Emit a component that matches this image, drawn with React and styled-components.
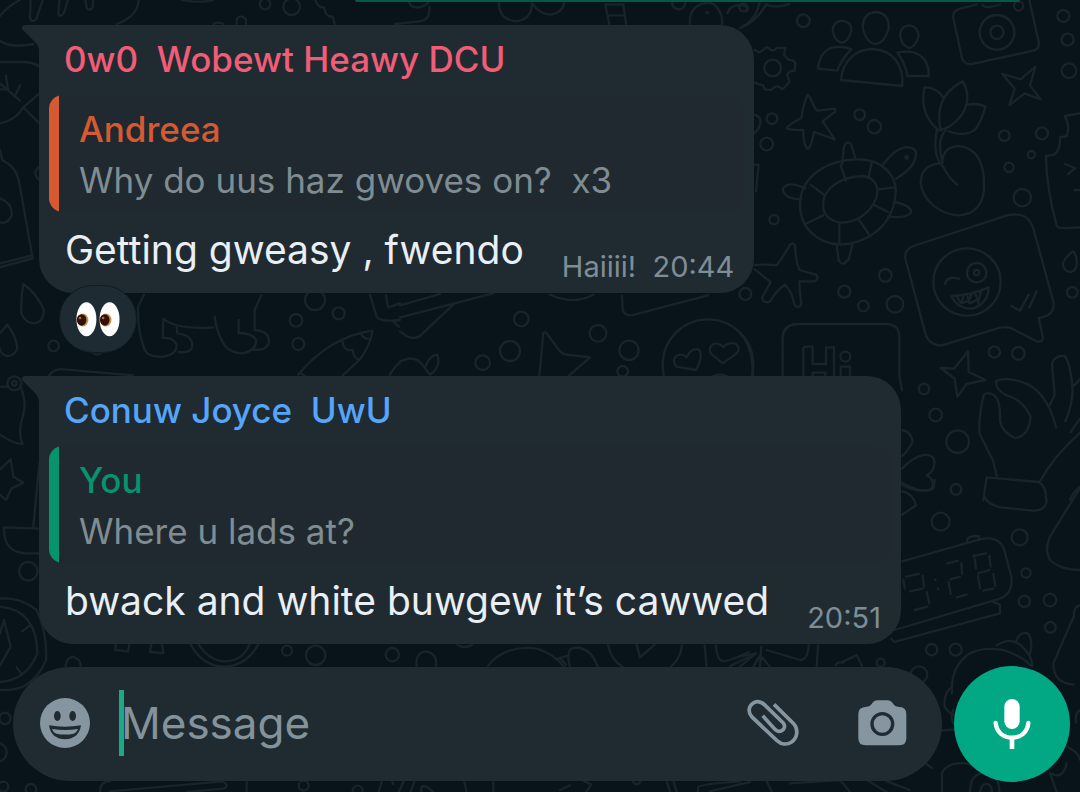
import React from "react";
import styled, { createGlobalStyle } from "styled-components";

const GlobalStyle = createGlobalStyle`
  * { box-sizing: border-box; }
  body {
    margin: 0;
    background: #09131a;
    font-family: Inter, "Liberation Sans", sans-serif;
  }
`;

const Screen = styled.div`
  position: relative;
  isolation: isolate;
  display: flex;
  flex-direction: column;
  min-height: 100vh;
  overflow: hidden;
  background: #09131a;
`;

const WallpaperLayer = styled.svg`
  position: absolute;
  inset: 0;
  z-index: -1;
  width: 100%;
  height: 100%;
  fill: none;
  stroke: #18232a;
  stroke-width: 7;
  stroke-linecap: round;
  stroke-linejoin: round;
`;

const SentEdge = styled.div`
  height: 2px;
  margin: 0 60px 0 355px;
  border-radius: 0 0 40px 40px;
  background: #06584a;
`;

const Thread = styled.main`
  display: flex;
  flex-direction: column;
  align-items: flex-start;
  gap: 83px;
  padding: 23px 40px 22px 39px;
`;

const Bubble = styled.article`
  position: relative;
  max-width: 100%;
  padding: 10px 10px 8px;
  border-radius: 0 34px 34px 34px;
  background: #1f2b31;
`;

const Tail = styled.svg`
  position: absolute;
  top: 0;
  left: -17px;
  width: 18px;
  height: 26px;
  fill: #1f2b31;
`;

const Sender = styled.h2`
  margin: 0 0 12px;
  padding: 0 15px;
  font-size: 35px;
  font-weight: 500;
  line-height: 48px;
  white-space: pre-wrap;
  color: ${(p) => p.$color};
`;

const Quote = styled.blockquote`
  margin: 0;
  padding: 9px 20px 6px 30px;
  border-radius: 14px;
  background: linear-gradient(to right, ${(p) => p.$color} 10px, #20292f 10px);
  font-size: 35px;
  line-height: 51px;
`;

const QuoteName = styled.cite`
  display: block;
  font-style: normal;
  font-weight: 500;
  color: ${(p) => p.$color};
`;

const QuoteText = styled.p`
  margin: 0;
  white-space: pre-wrap;
  color: #7f8d93;
`;

const BodyRow = styled.div`
  display: flex;
  align-items: flex-end;
  justify-content: space-between;
  gap: 38px;
  padding: 8px 10px 0 16px;
`;

const Body = styled.p`
  margin: 0;
  padding-bottom: 5px;
  font-size: 39px;
  line-height: 60px;
  color: #e9eff5;
`;

const Meta = styled.span`
  flex: none;
  font-size: 29px;
  line-height: 36px;
  white-space: pre;
  color: #7f8d96;
`;

const Reaction = styled.button`
  position: absolute;
  left: 20px;
  bottom: -60px;
  display: flex;
  align-items: center;
  justify-content: center;
  width: 78px;
  height: 68px;
  padding: 0;
  border: 1px solid #111c22;
  border-radius: 34px;
  background: #1f2b32;
`;

const Composer = styled.form`
  display: flex;
  align-items: center;
  gap: 12px;
  margin-top: auto;
  padding: 0 10px 10px 13px;
`;

const Field = styled.div`
  flex: 1;
  display: flex;
  align-items: center;
  min-width: 0;
  height: 114px;
  padding: 0 32px 3px 24px;
  border-radius: 57px;
  background: #1f2b31;
`;

const IconButton = styled.button`
  flex: none;
  display: flex;
  align-items: center;
  justify-content: center;
  width: 56px;
  height: 60px;
  padding: 0;
  border: 0;
  background: none;
  color: #8696a0;
`;

const Attachments = styled.div`
  flex: none;
  display: flex;
  gap: 53px;
`;

const InputWrap = styled.div`
  position: relative;
  flex: 1;
  min-width: 0;
  margin-left: 28px;
`;

const MessageInput = styled.input`
  display: block;
  width: 100%;
  height: 66px;
  padding: 0;
  border: 0;
  outline: 0;
  background: none;
  color: #e9eff5;
  font-family: inherit;
  font-size: 44px;
  caret-color: #1da886;
  &::placeholder {
    color: #84929b;
    opacity: 1;
  }
`;

const Caret = styled.span`
  position: absolute;
  top: 0;
  left: -2px;
  width: 5px;
  height: 66px;
  background: #1aaa88;
`;

const MicButton = styled.button`
  flex: none;
  display: flex;
  align-items: center;
  justify-content: center;
  width: 116px;
  height: 116px;
  padding: 0;
  border: 0;
  border-radius: 50%;
  background: #02a884;
`;

const Dots = ({ list }) =>
  list.map(([x, y, r]) => <circle key={`${x}-${y}`} cx={x} cy={y} r={r} />);

const Patch = ({ x, y, children }) => (
  <g transform={`translate(${x} ${y}) scale(0.33333)`}>{children}</g>
);

function Wallpaper() {
  return (
    <WallpaperLayer viewBox="0 0 1080 792" preserveAspectRatio="xMidYMid slice" aria-hidden="true">
      {/* top edge, left */}
      <Patch x={0} y={0}>
        <path d="M0 48C18 26 40 10 60 0M0 122C20 138 60 140 100 132M350 72C390 58 414 34 416 0M92 0L90 55Q98 72 110 55L128 0M178 0L175 42Q182 54 192 38L204 0M256 0L260 24Q270 36 279 20V0M545 0Q600 10 640 0" />
        <path d="M0 186H70Q105 188 118 200M0 370Q45 362 70 322L118 370M70 322L118 280M0 250L60 302M18 228L24 268M60 256L44 290M0 268L24 268" />
        <path d="M0 450Q5 475 8 482Q50 500 58 550L98 775L0 802M0 790L90 768M0 595Q38 610 35 645Q25 672 0 668M118 500Q94 518 118 540" />
        <path d="M946 0Q955 25 972 22Q976 52 998 50L1004 72M640 72Q655 64 670 72M710 72V58Q722 40 738 58V72" />
        <Dots list={[[795, 12, 16], [875, 20, 25]]} />
      </Patch>
      {/* top edge, middle */}
      <Patch x={360} y={0}>
        <path d="M148 8Q154 25 178 22Q206 14 208 0M208 20Q212 60 180 64L105 72M416 5Q416 60 470 64Q515 58 516 10Q540 44 575 44Q612 34 612 5M736 14L748 72M790 14L798 72M736 14H790M744 46H790M990 72C985 20 1030 0 1060 12Q1090 35 1086 72M1102 40Q1110 12 1150 16Q1170 24 1160 34M1146 80Q1190 60 1200 0" />
        <Dots list={[[956, 8, 20], [1042, 38, 2]]} />
      </Patch>
      {/* people, camera, star, tulip and turtle */}
      <Patch x={740} y={0}>
        <path d="M0 84Q50 65 78 14Q110 26 148 12M728 14Q730 28 780 14" />
        <path d="M278 90Q280 64 307 62Q336 66 334 92Q326 126 304 128Q282 122 278 90M368 80Q370 38 408 36Q448 40 446 84Q434 130 405 132Q376 126 368 80M480 104Q482 78 508 76Q536 80 536 108Q526 142 506 144Q484 136 480 104" />
        <path d="M303 240C308 180 350 147 398 147C454 150 492 190 487 258ZM334 148Q312 138 280 142Q240 152 234 206L292 212Q304 178 334 148M472 158Q500 152 524 158Q568 176 566 228L502 228Q496 190 472 158" />
        <path d="M710 14L660 26Q636 34 640 54L666 174Q672 194 696 192L880 152Q900 146 896 126L868 0" />
        <circle cx="771" cy="97" r="52" /><circle cx="771" cy="97" r="20" />
        <path d="M44 150L58 158L72 148Q78 138 88 146Q98 158 110 144L136 144L132 164L146 180Q162 178 166 190L164 212Q146 212 142 224L148 246L128 268Q114 254 102 262L94 270L74 268Q70 252 60 254L44 248" />
        <circle cx="98" cy="204" r="25" />
        <path d="M787 222L842 238L886 200Q876 236 870 256L902 298L854 280L808 316L824 266Z" />
        <path d="M203 284C214 290 218 322 232 332L284 326Q292 334 276 342L248 364Q268 392 284 418L222 396Q214 440 204 446Q190 440 190 390Q164 392 140 386Q144 374 184 354Q190 310 203 284Z" />
        <path d="M608 290Q590 262 554 262Q536 340 594 390Q634 388 668 340Q696 290 668 244Q604 276 598 340Q596 370 604 392M682 314Q716 308 736 320Q726 360 706 388Q676 412 626 394M590 392Q576 470 612 504Q628 536 652 554M618 390Q588 420 608 488M608 480Q612 440 656 438C710 442 732 490 732 550C736 612 700 646 658 646C594 644 546 596 542 548Q544 490 608 490" />
        <path d="M180 608C184 530 260 478 356 478C434 478 476 536 466 590C454 680 384 730 300 734C230 730 176 680 180 608ZM250 606C254 566 300 530 368 528C410 534 418 566 408 596C390 640 350 668 300 668C262 660 246 640 250 606Z" />
        <path d="M302 496L318 542M396 484L386 530M466 562L414 568M444 636L400 614M386 702L356 658M298 730V670M196 672L250 646M212 554L254 586M306 494L312 440Q322 418 334 434L346 476M430 492Q464 448 494 442Q530 440 528 464Q524 504 468 536M196 564Q140 540 128 568Q134 598 184 598M462 606Q510 614 514 636Q502 656 444 650M290 736L296 780M338 730L326 780" />
        <path d="M44 494H56L48 574M1020 340L974 348Q992 380 980 408L960 412Q962 450 942 464L918 468Q920 570 950 676Q954 686 980 684L1020 682M974 492L1006 504L984 522M1004 570H1020" />
        <Dots list={[[10, 22, 12], [190, 62, 19], [836, 18, 14], [970, 48, 18], [983, 119, 18], [987, 212, 22], [96, 356, 16], [80, 432, 19], [359, 344, 16], [403, 380, 20], [793, 407, 16], [906, 400, 18], [874, 464, 11], [807, 502, 14], [847, 593, 26], [102, 659, 14], [500, 472, 4]]} />
        <path d="M44 344Q66 350 60 374Q56 390 44 398" />
      </Patch>
      {/* message card, greeting sign and hand */}
      <Patch x={740} y={240}>
        <path d="M44 75Q84 72 110 76Q130 50 150 14Q164 4 166 22Q166 60 178 90L228 104Q240 116 222 124H178Q178 150 184 192Q178 208 164 196Q154 150 134 134Q110 150 90 184Q72 192 66 174Q78 150 92 126L44 88M296 60Q308 82 322 60" />
        <path d="M790 -70L520 18Q492 30 496 56L556 280Q566 316 606 316L770 266Q800 256 820 268L890 304Q912 308 908 288L896 234Q948 226 940 184L880 -34Q866 -76 830 -76Q810 -78 790 -70" />
        <circle cx="681" cy="126" r="101" /><circle cx="710" cy="98" r="29" /><circle cx="710" cy="98" r="8" />
        <path d="M614 132Q622 106 658 116M634 168Q700 164 746 142Q744 190 698 206Q654 208 634 168M648 166L664 190L672 164M680 162L686 182L696 160M704 158L716 182L724 150M670 188Q682 180 690 190L714 178L716 198M814 198L840 212L866 164M868 202L890 154" />
        <path d="M968 70Q976 50 1000 34Q1012 48 1010 74Q1006 96 988 96Q970 90 968 70M128 408V290Q132 254 170 252H440Q478 254 478 290V408L486 450M190 408V326Q190 320 200 320H218V372H258V322H282V408M218 408V398H256V408M302 408V380H330V408" />
        <circle cx="316" cy="350" r="15" />
        <path d="M602 384L642 386L684 334L686 396L736 420L680 432L652 470L644 416Z" />
        <path d="M0 280Q40 320 38 408M486 570Q512 574 518 604Q506 632 486 648M486 686C530 640 580 630 584 668Q582 696 560 706Q586 720 576 746Q540 762 486 734" />
        <path d="M770 708L760 664L718 580Q716 520 732 464Q744 454 762 466Q782 480 780 540Q784 576 826 594Q866 590 872 530Q850 480 800 466Q766 450 768 424Q790 410 840 424Q920 446 948 562M930 494L944 464L936 370Q946 344 974 348Q992 370 998 450Q996 500 976 544M1020 418L998 440M1020 536L992 576M1020 578Q940 650 900 724M740 712L896 726Q920 740 918 780M740 712L730 780M1020 740Q1000 756 990 780" />
        <Dots list={[[16, 162, 18], [436, 106, 19], [313, 155, 18], [370, 198, 16], [465, 193, 25], [997, 157, 16], [763, 336, 17], [835, 340, 19], [552, 447, 16], [587, 525, 19], [653, 605, 34], [648, 748, 16]]} />
      </Patch>
      {/* clock radio, fruit and pear */}
      <Patch x={740} y={480}>
        <path d="M486 8Q550 44 580 26L584 0M486 34Q520 40 528 76L486 104M734 50Q740 72 780 82L880 92Q920 90 920 60L918 50M1020 24L930 170Q912 210 930 240Q960 270 1020 270" />
        <path d="M486 244L720 178Q780 164 794 214L814 290Q820 340 780 356L464 450M464 486L780 400V374L760 366M464 486L454 476M682 184Q676 168 716 168L718 180" />
        <path d="M498 290L536 282M548 288L552 320M510 334L548 326M490 300L494 326M560 336L568 370M524 390L562 380M622 250L654 242M664 250L666 282M632 298L660 290M626 306L632 342M650 352L680 344M700 228L738 220M748 228L752 260M704 236L708 266M714 280L748 270M760 282L766 318M714 288L720 324M730 332L760 326M586 298V300M594 326V328" />
        <path d="M1020 376Q1000 380 1002 408L940 550Q940 610 1000 614M636 640Q630 560 690 520Q730 500 790 510Q850 530 870 556M770 496Q810 470 840 494Q880 530 876 560M828 484Q842 450 866 462Q880 490 870 520M636 620Q610 640 614 680Q630 704 644 706M600 752L650 748M640 690Q626 720 650 740" />
        <path d="M0 560L48 520L0 530M60 560L64 500M60 526L40 560M60 526L90 560M80 510L180 540Q204 540 206 496M234 496L230 560M288 556Q290 544 310 548M310 544L350 526L366 558M1020 690Q1004 700 1008 728M606 936V880Q620 846 680 850L860 900M690 936Q690 880 736 878Q780 890 778 936M720 936Q724 908 744 912Q756 920 756 936M980 850Q970 900 930 880L950 936M980 800Q1020 820 1020 840M80 904L96 936M150 910L300 900L330 936M380 900L440 936M440 904L510 930M556 850L576 864" />
        <Dots list={[[602, 125, 27], [839, 172, 24], [858, 279, 14], [853, 364, 17], [930, 360, 19], [931, 442, 16], [575, 509, 17], [647, 509, 18], [537, 584, 25], [422, 548, 12]]} />
      </Patch>
      {/* strip between the bubbles */}
      <Patch x={0} y={270}>
        <path d="M70 42Q62 86 64 130Q76 160 104 160Q130 156 132 120Q110 70 70 42ZM22 164Q50 200 52 236Q42 260 20 258Q0 250 0 236M22 164L0 190M148 316Q160 296 190 298L400 316M0 350H22" />
        <path d="M432 74L414 110Q412 180 434 240Q444 262 490 260Q532 254 530 224Q520 200 488 204L490 146Q530 180 640 172M530 172L532 190Q582 196 576 232Q570 250 536 246M644 140Q650 190 674 226Q692 250 730 250Q770 240 768 210Q756 188 716 190L716 150M784 76L764 120V180Q812 184 806 220Q796 244 760 238" />
        <path d="M894 314Q990 200 1118 182Q1110 230 1078 270L1028 316M1028 216Q1030 244 1058 240Q1060 262 1074 268M1084 194Q1092 206 1104 206M900 308L914 318M1110 74L1130 140Q1140 156 1200 150M1158 76L1164 112L1200 100M1170 314Q1184 288 1200 278M1180 154L1196 170M276 246Q292 262 308 246" />
        <circle cx="43" cy="340" r="21" /><circle cx="43" cy="340" r="7" />
        <Dots list={[[161, 228, 16], [888, 151, 19], [1016, 130, 18], [895, 222, 18], [945, 90, 30]]} />
      </Patch>
      <Patch x={400} y={280}>
        <path d="M0 76L120 42M0 112L280 40M160 74Q100 130 60 168Q40 180 20 168L0 154M450 44Q520 76 580 44M666 48L668 90Q674 106 694 106L924 46M0 244Q50 220 74 264Q90 224 112 224Q124 262 90 284L74 264M418 288L430 158Q436 152 446 168L480 214Q490 226 520 226L570 232L506 288M888 270L830 260Q812 240 832 226Q848 220 860 232Q872 204 896 208Q912 226 888 270ZM968 250L932 220Q924 196 946 190Q964 192 970 202Q986 184 1008 192Q1024 206 1008 222ZM940 288Q960 280 980 288" />
        <Dots list={[[924, 254, 136], [364, 117, 22], [330, 213, 30], [248, 248, 22], [594, 160, 25], [687, 211, 29], [668, 274, 16]]} />
      </Patch>
      {/* left edge: bell, star, bowl and compass */}
      <Patch x={0} y={380}>
        <path d="M62 22Q82 70 68 110Q52 160 68 192Q40 192 0 164M0 268L32 238L40 290L70 308L34 326L18 360L0 344M118 250L100 440M118 446L12 442Q10 520 80 520H118M0 656Q60 650 110 690Q142 760 138 840Q120 890 70 920Q40 932 0 930M0 680Q110 690 112 820Q80 900 0 906M0 760L12 720L32 800L0 856M66 754L92 736M50 862L66 884" />
        <circle cx="85" cy="574" r="28" />
      </Patch>
      <Patch x={0} y={640}>
        <path d="M348 14L346 30L384 34L388 14M454 14L450 36L490 40L486 14M572 14Q610 80 672 80Q740 78 774 14M596 14Q630 66 680 64Q730 60 748 14M196 80Q200 52 220 50Q244 60 242 80M0 310Q22 320 20 340Q16 360 0 364M300 456Q300 424 330 424M330 454L670 424Q690 440 670 446L560 456M740 424V456" />
        <Dots list={[[861, 32, 15], [947, 46, 29], [15, 235, 17], [10, 440, 15], [93, 448, 16], [911, 437, 15]]} />
      </Patch>
      <Patch x={330} y={630}>
        <path d="M260 110Q254 66 290 64Q324 72 318 110M474 108C510 60 570 48 620 56Q670 70 704 112M684 86L716 76M690 84L708 104M720 112Q706 60 730 54Q780 46 804 112M834 44Q842 90 880 112M920 44L930 82L974 44M1056 46Q1050 90 1020 112M1124 46L1130 112M1158 46Q1160 90 1180 94Q1210 90 1256 66M1200 108L1260 80M382 44Q404 58 426 44M146 486L156 452M186 452L190 462M206 486L222 452M242 486L254 452M274 486Q270 450 310 486M402 452L410 486M490 452V486M690 480L720 466M760 452L784 464L768 486M1010 452L1020 486M1030 452L1040 486M1104 486V472Q1108 462 1230 454M1140 484L1260 456" />
        <Dots list={[[187, 74, 20], [83, 482, 15], [920, 450, 12]]} />
      </Patch>
    </WallpaperLayer>
  );
}

const EyesIcon = () => (
  <svg width="48" height="36" viewBox="225 92 144 112" role="img" aria-label="Eyes">
    <ellipse cx="261" cy="149" rx="31" ry="53" fill="#fdfdfd" />
    <ellipse cx="333" cy="149" rx="31" ry="53" fill="#fdfdfd" />
    <ellipse cx="250" cy="151" rx="17" ry="20" fill="#c49a55" />
    <ellipse cx="322" cy="151" rx="17" ry="20" fill="#c49a55" />
    <ellipse cx="246" cy="151" rx="15" ry="18" fill="#341005" />
    <ellipse cx="318" cy="151" rx="15" ry="18" fill="#341005" />
    <circle cx="241" cy="145" r="4" fill="#a1764a" />
    <circle cx="313" cy="145" r="4" fill="#a1764a" />
  </svg>
);

const SmileIcon = () => (
  <svg width="50" height="50" viewBox="0 0 150 150" aria-hidden="true">
    <circle cx="75" cy="75" r="75" fill="currentColor" />
    <g fill="#1f2b31">
      <ellipse cx="52" cy="54" rx="10" ry="15" />
      <ellipse cx="98" cy="54" rx="10" ry="15" />
      <path d="M27 82Q75 90 123 82C119 111 99 124 75 124C51 124 31 111 27 82Z" />
    </g>
    <path d="M36 93Q75 99 114 93Q109 105 101 107Q75 112 49 107Q41 105 36 93Z" fill="currentColor" />
  </svg>
);

const ClipIcon = () => (
  <svg width="56" height="52" viewBox="135 143 168 156" fill="none" stroke="currentColor" strokeWidth="11" aria-hidden="true">
    <path d="M222 165L281 223C297 242 291 267 275 278C260 288 243 285 231 274L155 202C143 188 146 170 160 161C171 154 184 157 193 166L249 220C257 229 253 238 248 242C241 248 232 247 226 241L188 199" />
  </svg>
);

const CameraIcon = () => (
  <svg width="49" height="46" viewBox="473 146 147 138" aria-hidden="true">
    <path d="M494 167C510 167 512 160 518 153Q523 147 531 147H562Q570 147 575 153C581 161 584 167 598 167Q618 168 618 188V261Q618 282 597 282H496Q474 282 474 261V188Q474 169 494 167Z" fill="currentColor" />
    <circle cx="546" cy="218" r="31" fill="none" stroke="#1f2b35" strokeWidth="10" />
  </svg>
);

const MicIcon = () => (
  <svg width="38" height="52" viewBox="881 145 114 156" fill="none" stroke="#fff" aria-hidden="true">
    <rect x="915" y="148" width="46" height="90" rx="23" fill="#fff" stroke="none" />
    <path d="M889 220C892 250 914 264 938 264C962 264 984 250 987 220" strokeWidth="13" strokeLinecap="round" />
    <path d="M938 264V298" strokeWidth="14" />
  </svg>
);

function Message({ sender, color, quoteName, quoteColor, quote, body, meta, children }) {
  return (
    <Bubble>
      <Tail viewBox="0 0 18 26" aria-hidden="true">
        <path d="M18 0H3C0 0-1 3 1 5L12 16Q17 21 17 26H18Z" />
      </Tail>
      <Sender $color={color}>{sender}</Sender>
      <Quote $color={quoteColor}>
        <QuoteName $color={quoteColor}>{quoteName}</QuoteName>
        <QuoteText>{quote}</QuoteText>
      </Quote>
      <BodyRow>
        <Body>{body}</Body>
        <Meta>{meta}</Meta>
      </BodyRow>
      {children}
    </Bubble>
  );
}

export default function App() {
  return (
    <Screen>
      <GlobalStyle />
      <Wallpaper />
      <SentEdge />
      <Thread>
        <Message
          sender={"0w0  Wobewt Heawy DCU"}
          color="#f15c76"
          quoteName="Andreea"
          quoteColor="#d65a31"
          quote={"Why do uus haz gwoves on?  x3"}
          body="Getting gweasy , fwendo"
          meta={"Haiiii!  20:44"}
        >
          <Reaction type="button">
            <EyesIcon />
          </Reaction>
        </Message>
        <Message
          sender={"Conuw Joyce  UwU"}
          color="#55a5fb"
          quoteName="You"
          quoteColor="#06946f"
          quote="Where u lads at?"
          body="bwack and white buwgew it’s cawwed"
          meta="20:51"
        />
      </Thread>
      <Composer onSubmit={(e) => e.preventDefault()}>
        <Field>
          <IconButton type="button" aria-label="Emoji">
            <SmileIcon />
          </IconButton>
          <InputWrap>
            <MessageInput type="text" placeholder="Message" aria-label="Message" />
            <Caret />
          </InputWrap>
          <Attachments>
            <IconButton type="button" aria-label="Attach">
              <ClipIcon />
            </IconButton>
            <IconButton type="button" aria-label="Camera">
              <CameraIcon />
            </IconButton>
          </Attachments>
        </Field>
        <MicButton type="button" aria-label="Record voice message">
          <MicIcon />
        </MicButton>
      </Composer>
    </Screen>
  );
}
